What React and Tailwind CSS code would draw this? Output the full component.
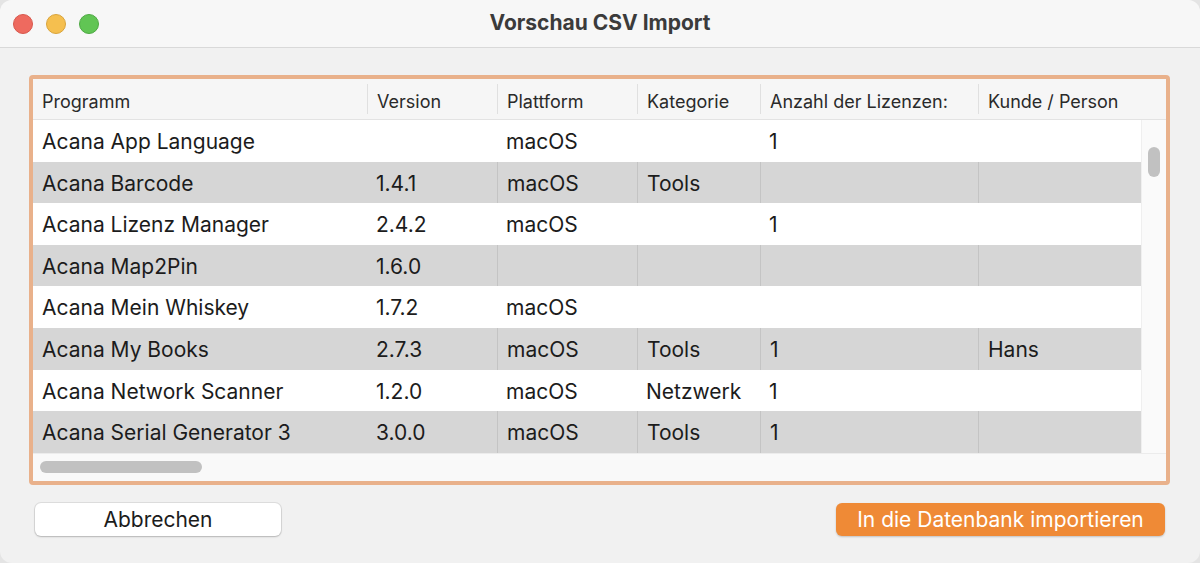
import React from "react";

const cols = [
  { label: "Programm", w: "w-[334px]" },
  { label: "Version", w: "w-[130px]" },
  { label: "Plattform", w: "w-[140px]" },
  { label: "Kategorie", w: "w-[123px]" },
  { label: "Anzahl der Lizenzen:", w: "w-[218px]" },
  { label: "Kunde / Person", w: "flex-1" },
];

const rows = [
  ["Acana App Language", "", "macOS", "", "1", ""],
  ["Acana Barcode", "1.4.1", "macOS", "Tools", "", ""],
  ["Acana Lizenz Manager", "2.4.2", "macOS", "", "1", ""],
  ["Acana Map2Pin", "1.6.0", "", "", "", ""],
  ["Acana Mein Whiskey", "1.7.2", "macOS", "", "", ""],
  ["Acana My Books", "2.7.3", "macOS", "Tools", "1", "Hans"],
  ["Acana Network Scanner", "1.2.0", "macOS", "Netzwerk", "1", ""],
  ["Acana Serial Generator 3", "3.0.0", "macOS", "Tools", "1", ""],
];

const font = { fontFamily: "Inter, 'Open Sans', 'Liberation Sans', sans-serif" };

export default function App() {
  return (
    <div className="w-[1200px] h-[563px] bg-[#e4e4e4]" style={font}>
      <div className="w-full h-full rounded-[12px] overflow-hidden bg-[#f1f1f1] flex flex-col">
        {/* Title bar */}
        <div className="h-[48px] bg-[#f7f7f7] border-b border-[#d9d9d9] grid grid-cols-[1fr_auto_1fr] items-center shrink-0">
          <div className="flex items-center gap-[13px] pl-[13px]">
            <div className="w-[20px] h-[20px] rounded-full bg-[#ee6a5f] border border-[#d8584d]" />
            <div className="w-[20px] h-[20px] rounded-full bg-[#f5bf4f] border border-[#d9a43b]" />
            <div className="w-[20px] h-[20px] rounded-full bg-[#61c554] border border-[#4ea943]" />
          </div>
          <div className="text-[21px] font-bold text-[#3b3b3b] pb-[2px]">Vorschau CSV Import</div>
          <div />
        </div>

        {/* Body */}
        <div className="flex-1 flex flex-col pt-[27px] pl-[29px] pr-[30px]">
          <div className="h-[410px] border-[4px] border-[#e9b18b] rounded-[4px] bg-white flex flex-col overflow-hidden">
            {/* Header */}
            <div className="h-[41px] bg-[#f6f6f6] border-b border-[#e3e3e3] flex items-center shrink-0 text-[18px] text-[#2a2a2a]">
              {cols.map((c, i) => (
                <div
                  key={i}
                  className={`${c.w} h-[30px] flex items-center px-[9px] pt-[4px] ${i > 0 ? "border-l border-[#e0e0e0]" : ""}`}
                >
                  {c.label}
                </div>
              ))}
              <div className="w-[25px]" />
            </div>
            {/* Rows + vertical scrollbar */}
            <div className="flex">
              <div className="flex-1 flex flex-col">
                {rows.map((r, ri) => (
                  <div
                    key={ri}
                    className={`h-[41.6px] flex text-[21px] text-[#1c1c1c] ${ri % 2 === 1 ? "bg-[#d6d6d6]" : "bg-white"}`}
                  >
                    {r.map((cell, ci) => (
                      <div
                        key={ci}
                        className={`${cols[ci].w} flex items-center px-[9px] pt-[2px] ${
                          ri % 2 === 1 && ci > 1 ? "border-l border-[#c4c4c4]" : ""
                        }`}
                      >
                        {cell}
                      </div>
                    ))}
                  </div>
                ))}
              </div>
              <div className="w-[25px] bg-[#fafafa] border-l border-[#efefef] flex justify-center pt-[27px]">
                <div className="w-[12px] h-[30px] rounded-full bg-[#c1c1c1]" />
              </div>
            </div>
            {/* Horizontal scrollbar */}
            <div className="flex-1 bg-[#f9f9f9] border-t border-[#ececec] pl-[7px] pt-[7px]">
              <div className="w-[162px] h-[12px] rounded-full bg-[#c1c1c1]" />
            </div>
          </div>

          {/* Footer */}
          <div className="flex justify-between items-center mt-[18px] pl-[6px] pr-[5px]">
            <button className="w-[246px] h-[33px] rounded-[6px] bg-white text-[21px] text-[#1c1c1c] shadow-[0_0_0_1px_rgba(0,0,0,0.08),0_1px_2px_rgba(0,0,0,0.18)]">
              Abbrechen
            </button>
            <button className="w-[329px] h-[33px] rounded-[6px] bg-[#ef8a36] text-[21px] text-white shadow-[0_1px_2px_rgba(0,0,0,0.2)]">
              In die Datenbank importieren
            </button>
          </div>
        </div>
      </div>
    </div>
  );
}
